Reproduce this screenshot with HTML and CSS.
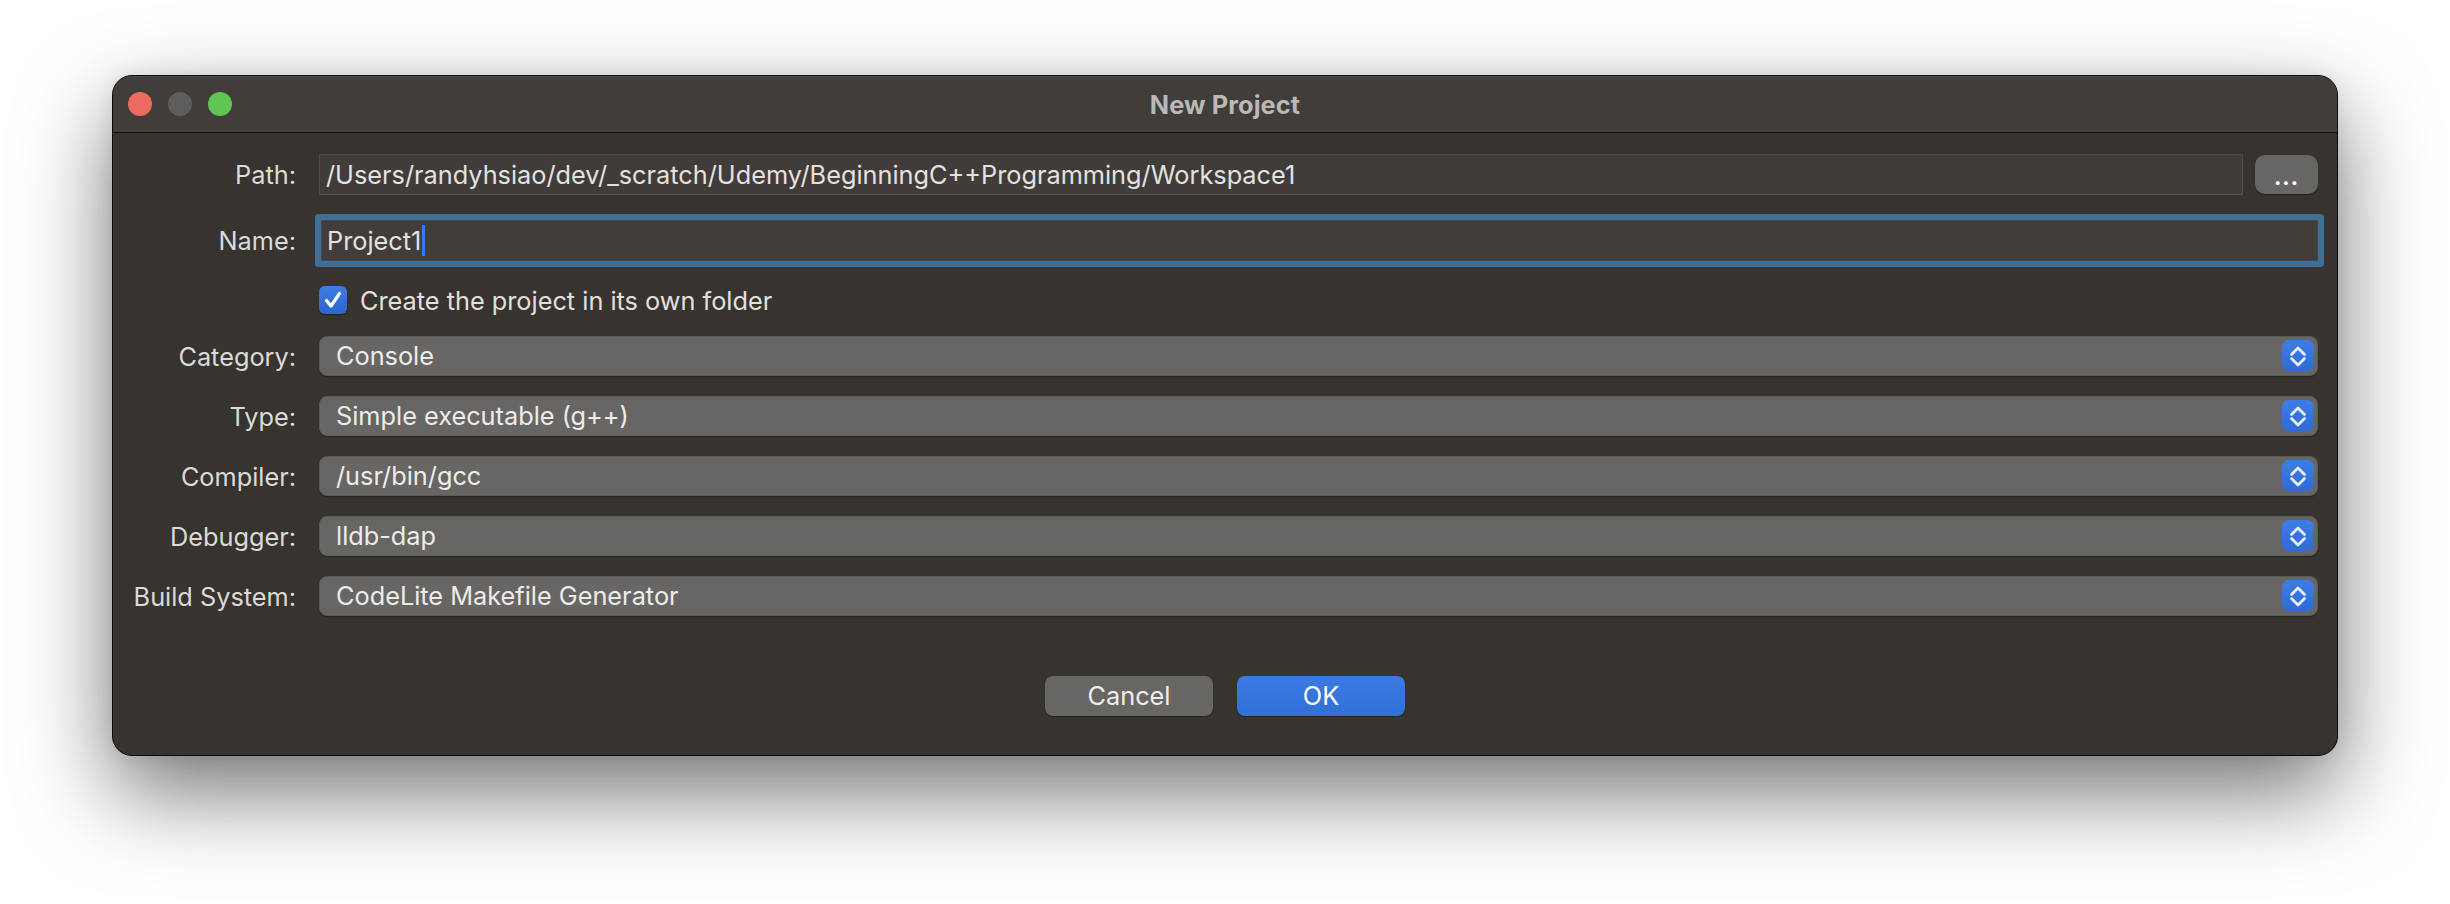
FILE: index.html
```html
<!DOCTYPE html>
<html lang="en">
<head>
<meta charset="utf-8">
<title>New Project</title>
<link rel="stylesheet" href="styles.css">
</head>
<body>
<div class="desktop">
  <div class="window">
    <div class="titlebar">
      <div class="lights">
        <span class="light red"></span>
        <span class="light gray"></span>
        <span class="light green"></span>
      </div>
      <div class="title">New Project</div>
    </div>
    <div class="content">
      <div class="form">
        <div class="lbl row-path">Path:</div>
        <div class="path-wrap row-path">
          <div class="field path">/Users/randyhsiao/dev/_scratch/Udemy/BeginningC++Programming/Workspace1</div>
          <button class="dots">...</button>
        </div>

        <div class="lbl row-name">Name:</div>
        <div class="field name row-name"><span>Project1</span><span class="caret"></span></div>

        <div class="row-check"></div>
        <div class="check-wrap row-check">
          <span class="checkbox">
            <svg width="28" height="28" viewBox="0 0 28 28"><polyline points="7.5,14.5 12,20 20.5,7.5" fill="none" stroke="#ffffff" stroke-width="3.2" stroke-linecap="round" stroke-linejoin="round"/></svg>
          </span>
          <span class="check-text">Create the project in its own folder</span>
        </div>

        <div class="lbl row-first">Category:</div>
        <div class="select row-first"><span class="sel-text">Console</span><span class="stepper"><svg width="32" height="32" viewBox="0 0 32 32"><polyline points="9.5,14.5 16,8 22.5,14.5" fill="none" stroke="#e9eefb" stroke-width="2.8" stroke-linecap="round" stroke-linejoin="round"/><polyline points="9.5,18.5 16,25 22.5,18.5" fill="none" stroke="#e9eefb" stroke-width="2.8" stroke-linecap="round" stroke-linejoin="round"/></svg></span></div>

        <div class="lbl row-sel">Type:</div>
        <div class="select row-sel"><span class="sel-text">Simple executable (g++)</span><span class="stepper"><svg width="32" height="32" viewBox="0 0 32 32"><polyline points="9.5,14.5 16,8 22.5,14.5" fill="none" stroke="#e9eefb" stroke-width="2.8" stroke-linecap="round" stroke-linejoin="round"/><polyline points="9.5,18.5 16,25 22.5,18.5" fill="none" stroke="#e9eefb" stroke-width="2.8" stroke-linecap="round" stroke-linejoin="round"/></svg></span></div>

        <div class="lbl row-sel">Compiler:</div>
        <div class="select row-sel"><span class="sel-text">/usr/bin/gcc</span><span class="stepper"><svg width="32" height="32" viewBox="0 0 32 32"><polyline points="9.5,14.5 16,8 22.5,14.5" fill="none" stroke="#e9eefb" stroke-width="2.8" stroke-linecap="round" stroke-linejoin="round"/><polyline points="9.5,18.5 16,25 22.5,18.5" fill="none" stroke="#e9eefb" stroke-width="2.8" stroke-linecap="round" stroke-linejoin="round"/></svg></span></div>

        <div class="lbl row-sel">Debugger:</div>
        <div class="select row-sel"><span class="sel-text">lldb-dap</span><span class="stepper"><svg width="32" height="32" viewBox="0 0 32 32"><polyline points="9.5,14.5 16,8 22.5,14.5" fill="none" stroke="#e9eefb" stroke-width="2.8" stroke-linecap="round" stroke-linejoin="round"/><polyline points="9.5,18.5 16,25 22.5,18.5" fill="none" stroke="#e9eefb" stroke-width="2.8" stroke-linecap="round" stroke-linejoin="round"/></svg></span></div>

        <div class="lbl row-sel">Build System:</div>
        <div class="select row-sel"><span class="sel-text">CodeLite Makefile Generator</span><span class="stepper"><svg width="32" height="32" viewBox="0 0 32 32"><polyline points="9.5,14.5 16,8 22.5,14.5" fill="none" stroke="#e9eefb" stroke-width="2.8" stroke-linecap="round" stroke-linejoin="round"/><polyline points="9.5,18.5 16,25 22.5,18.5" fill="none" stroke="#e9eefb" stroke-width="2.8" stroke-linecap="round" stroke-linejoin="round"/></svg></span></div>
      </div>
      <div class="buttons">
        <button class="btn cancel">Cancel</button>
        <button class="btn ok">OK</button>
      </div>
    </div>
  </div>
</div>
</body>
</html>
```

FILE: styles.css
```css
* { box-sizing: border-box; }

html, body {
  margin: 0;
  padding: 0;
  background: #ffffff;
}

body {
  width: 2450px;
  height: 904px;
  overflow: hidden;
  font-family: "Inter", "Liberation Sans", sans-serif;
}

.desktop {
  padding: 75px 0 0 112px;
}

.window {
  width: 2226px;
  background-color: #37332f;
  border: 1px solid #0c0b0b;
  border-radius: 20px;
  overflow: hidden;
  box-shadow: 0 36px 90px rgba(0, 0, 0, 0.55), 0 0 18px rgba(0, 0, 0, 0.08);
}

.titlebar {
  position: relative;
  height: 57px;
  background: #403d3b;
  border-bottom: 1px solid #141211;
  display: flex;
  align-items: center;
  justify-content: center;
  box-shadow: inset 0 1px 0 rgba(255, 255, 255, 0.09);
}

.lights {
  position: absolute;
  left: 15px;
  top: 16px;
  display: flex;
  gap: 16px;
}

.light {
  width: 24px;
  height: 24px;
  border-radius: 50%;
  display: block;
}
.light.red { background: #ee6b5f; }
.light.gray { background: #5f5d5b; }
.light.green { background: #60c554; }

.title {
  color: #bbb9b7;
  font-weight: 700;
  font-size: 25.3px;
  letter-spacing: 0.1px;
}

.content {
  padding: 21px 19px 39px 0;
}

.form {
  display: grid;
  grid-template-columns: 183px 1fr;
  column-gap: 23px;
  align-items: center;
  font-size: 25.3px;
}

.lbl {
  text-align: right;
  color: #dcdad8;
  white-space: nowrap;
}

.row-name { margin-top: 25px; }
.row-check { margin-top: 25px; }
.row-first { margin-top: 22px; }
.row-sel { margin-top: 20px; }

.path-wrap {
  display: flex;
  align-items: center;
  gap: 12px;
}

.field {
  height: 41px;
  background: #403c3a;
  border: 1px solid #4d4947;
  border-bottom-color: #57534f;
  color: #e4e2e0;
  display: flex;
  align-items: center;
  padding: 0 6px;
  white-space: nowrap;
}

.field.path {
  flex: 1;
}

.dots {
  width: 63px;
  height: 39px;
  border: none;
  border-radius: 10px;
  background: #686664;
  color: #ffffff;
  font-family: inherit;
  font-size: 22px;
  font-weight: 700;
  letter-spacing: 1px;
  padding: 4px 0 0 0;
  box-shadow: 0 1px 1px rgba(0, 0, 0, 0.35);
}

.field.name {
  margin-left: 2px;
  border-color: #4a4644;
  background: #413d3b;
  box-shadow: 0 0 0 6px #3f6e98;
  border-radius: 1px;
  padding-left: 5px;
}

.caret {
  display: inline-block;
  width: 3px;
  height: 31px;
  background: #2f7bf2;
  margin-left: 1px;
}

.check-wrap {
  display: flex;
  align-items: center;
  gap: 13px;
  height: 28px;
}

.checkbox {
  width: 28px;
  height: 28px;
  border-radius: 6px;
  background: linear-gradient(#3b7de2, #2d66cf);
  display: block;
  box-shadow: 0 1px 1px rgba(0, 0, 0, 0.4);
}
.checkbox svg { display: block; }

.check-text {
  color: #e2e0de;
}

.select {
  height: 40px;
  border-radius: 8px;
  background: #686664;
  border: 1px solid #5c5a58;
  box-shadow: 0 1px 1px rgba(0, 0, 0, 0.3);
  display: flex;
  align-items: center;
  padding: 0 3px 1px 16px;
  color: #eeecea;
}

.sel-text {
  flex: 1;
  white-space: nowrap;
}

.stepper {
  width: 32px;
  height: 31px;
  border-radius: 7px;
  background: linear-gradient(#3d7ee4, #2f6bd5);
  display: flex;
  align-items: center;
  justify-content: center;
  overflow: hidden;
}
.stepper svg { display: block; }

.buttons {
  display: flex;
  justify-content: center;
  gap: 24px;
  margin-top: 60px;
  padding-left: 19px;
}

.btn {
  width: 168px;
  height: 40px;
  border: none;
  border-radius: 8px;
  font-family: inherit;
  font-size: 25.3px;
  color: #f0eeec;
  padding: 0 0 1px 0;
  box-shadow: 0 1px 1px rgba(0, 0, 0, 0.35);
}

.btn.cancel {
  background: #686664;
}

.btn.ok {
  background: linear-gradient(#3b7ae0, #3170d6);
  color: #ffffff;
}
```
